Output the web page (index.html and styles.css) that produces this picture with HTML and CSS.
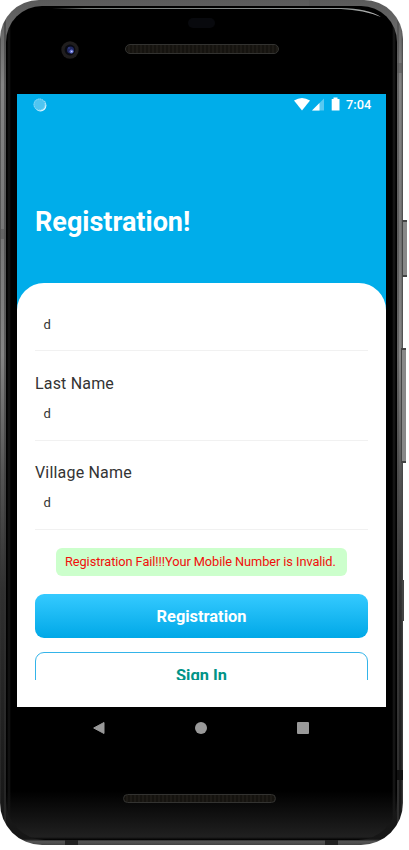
FILE: index.html
```html
<!DOCTYPE html>
<html lang="en">
<head>
<meta charset="utf-8">
<title>Registration</title>
<link rel="stylesheet" href="styles.css">
</head>
<body>
<div class="phone">
  <i class="side-key power"></i>
  <i class="side-key volume"></i>
  <i class="side-key lower"></i>
  <i class="band top-right"></i>
  <i class="band left"></i>
  <i class="band right"></i>
  <i class="band right-low"></i>
  <i class="band bottom-left"></i>
  <i class="band bottom-right"></i>
  <div class="glass">
    <svg class="shine" width="391" height="30" viewBox="0 0 391 30" fill="none"><defs><linearGradient id="edge"><stop offset="0" stop-color="#777c7a" stop-opacity="0"/><stop offset=".1" stop-color="#777c7a"/><stop offset=".9" stop-color="#929796"/><stop offset="1" stop-color="#bbb"/></linearGradient></defs><path d="M46 2H335Q362 2.5 375 11Q358 4 335 3H46Z" fill="url(#edge)"/></svg>
    <header class="bezel">
      <i class="sensor"></i>
      <svg class="camera" width="18" height="18" viewBox="0 0 18 18"><circle cx="9" cy="9" r="8.7" fill="#201e1e"/><circle cx="9" cy="9" r="5.4" fill="#090a12"/><circle cx="9.5" cy="9" r="3.5" fill="#202862"/><circle cx="10.5" cy="10.5" r="2" fill="#636fcd"/><circle cx="10.7" cy="10.5" r=".8" fill="#ccd3fa"/><circle cx="8" cy="7" r=".8" fill="#414e9b"/></svg>
      <i class="speaker"></i>
    </header>
    <main class="screen">
      <div class="hero">
        <div class="status">
          <svg class="sync" width="14" height="14" viewBox="0 0 14 14"><circle cx="7.5" cy="7.5" r="5.9" fill="#d9f4ff"/><circle cx="6.5" cy="6.5" r="6" fill="#50c5f1"/><circle cx="6.5" cy="6.5" r="5.5" fill="none" stroke="#9de0f8" stroke-dasharray="1 1"/></svg>
          <svg width="72" height="16" viewBox="0 0 72 16" fill="#fff"><path d="M0 3.6Q8 -1.8 16 3.6L8 13.5Z"/><path d="M18 13.5L30 1.5V13.5Z" opacity=".35"/><path d="M18 13.5L25.5 6V13.5Z"/><path d="M39.5 .5H43.5V1.9H45.5V13.5H37.7V1.9H39.5Z"/></svg>
          <span class="clock">7:04</span>
        </div>
        <h1>Registration!</h1>
      </div>
      <form class="sheet">
        <div class="field first"><span class="value">d</span></div>
        <div class="field"><span class="label">Last Name</span><span class="value">d</span></div>
        <div class="field"><span class="label">Village Name</span><span class="value">d</span></div>
        <div class="message">Registration Fail!!!Your Mobile Number is Invalid.</div>
        <div class="button primary">Registration</div>
        <div class="cut"><div class="button secondary">Sign In</div></div>
      </form>
    </main>
    <nav class="nav">
      <svg width="12" height="12" viewBox="0 0 12 12"><path d="M.7 6L11 .5V11.5Z" fill="#999" stroke="#999" stroke-linejoin="round"/></svg>
      <svg width="12" height="12" viewBox="0 0 12 12"><circle cx="6" cy="6" r="6" fill="#999"/></svg>
      <svg width="12" height="12" viewBox="0 0 12 12"><rect width="12" height="12" rx="1" fill="#999"/></svg>
    </nav>
    <footer class="chin"><i class="speaker"></i></footer>
  </div>
</div>
</body>
</html>
```
FILE: styles.css
```css
* { box-sizing: border-box; }
body { margin: 0; width: 409px; height: 850px; overflow: hidden; background: #fff; font-family: Roboto, sans-serif; color: #333; }
.phone {
  position: relative; width: 403px; height: 845px; padding: 6px 6px 5px;
  border-radius: 39px 39px 42px 42px;
  background: linear-gradient(90deg, #333 0, transparent 1px, transparent 4px, #333 5px, transparent 6px, transparent 397px, #444 398px, transparent 399px, transparent 401px, #444 403px), linear-gradient(#5a5a5a 0, #858585 10%, #777 28%, #858585 42%, #555 56%, #303030 70%, #191919 94%, #161616 99.3%, #555 99.6%, #444 100%);
}
.glass {
  position: relative; height: 834px; border-radius: 36px 36px 39px 39px; overflow: hidden;
  background: linear-gradient(90deg, transparent 1px, #151515 3px, transparent 5px, transparent 386px, #1b1b1b 388px, transparent 390px), linear-gradient(#000 0, #000 785px, #202020 831px, #000 834px);
}
.shine { position: absolute; top: 0; left: 0; }
.bezel { height: 88px; display: grid; grid-template-columns: 55px 64px 154px; grid-template-rows: 12px 11px 14px 30px; align-items: start; }
.sensor { grid-column: 3; grid-row: 2; width: 27px; height: 10px; margin-left: 63px; border-radius: 5px; background: #08090d; }
.camera { grid-column: 2; grid-row: 4; margin-top: -2px; }
.speaker { display: block; width: 154px; height: 10px; border: 1px solid #333331; border-radius: 5px; background: repeating-linear-gradient(90deg, #15130f 0, #15130f 2px, #25221d 3px, #15130f 4px); }
.bezel .speaker { grid-column: 3; grid-row: 4; margin-top: 1px; }
.screen { width: 369px; height: 613px; margin-left: 11px; background: #00adea; overflow: hidden; }
.hero { height: 189px; }
.status { height: 22px; padding: 3px 14px 0 16px; display: flex; align-items: flex-start; }
.sync { margin-right: auto; margin-top: 1px; }
.clock { width: 26px; margin-left: -20px; color: #fff; font-size: 12.8px; line-height: 16px; font-weight: 500; }
h1 { margin: 90px 0 0 18px; color: #fff; font-size: 27px; line-height: 32px; font-weight: 700; }
.sheet { height: 424px; padding: 0 18px; border-radius: 27px 27px 0 0; background: #fff; }
.field { height: 89px; padding-top: 21px; border-bottom: 1px solid #f1f1f1; display: flex; flex-direction: column; }
.first { height: 68px; padding-top: 32px; }
.field.first + .field { height: 90px; padding-top: 22px; }
.label { font-size: 16px; line-height: 22px; letter-spacing: .18px; }
.value { font-size: 13px; line-height: 20px; padding-left: 8.5px; margin-top: 9px; }
.first .value { margin-top: 0; }
.message { width: 291px; height: 28px; margin: 18px 0 18px 21px; padding-left: 9px; border-radius: 6px; background: #cfc; color: #f10f0b; font-size: 12.8px; letter-spacing: -.08px; line-height: 28px; white-space: nowrap; }
.button { height: 44px; border-radius: 9px; text-align: center; font-size: 16.4px; line-height: 46px; font-weight: 700; }
.primary { color: #fff; background: linear-gradient(#35caff, #00a8e7); }
.cut { height: 28px; margin-top: 14px; overflow: hidden; }
.secondary { border: 1px solid #34b4e9; color: #009387; line-height: 45px; }
.nav { height: 42px; width: 216px; margin-left: 87px; display: flex; justify-content: space-between; align-items: center; }
.chin { padding: 45px 0 0 117px; }
.chin .speaker { width: 153px; height: 9px; }
.side-key { position: absolute; left: 402px; width: 5px; border: solid #444; border-width: 2px 0 2px 1px; background: #888; }
.power { top: 220px; height: 57px; }
.volume { top: 348px; height: 115px; left: 401px; }
.lower { top: 580px; height: 41px; width: 2px; background: #444; border-color: #444; }
.band { position: absolute; background: #5558; }
.top-right { left: 309px; top: 0; width: 11px; height: 6px; }
.left { left: 0; top: 229px; width: 6px; height: 10px; }
.right { left: 397px; top: 63px; width: 6px; height: 10px; }
.right-low { left: 397px; top: 770px; width: 6px; height: 10px; background: #111; }
.bottom-left { left: 65px; bottom: 0; width: 13px; height: 5px; background: #222; }
.bottom-right { left: 325px; bottom: 0; width: 13px; height: 5px; background: #222; }
```
